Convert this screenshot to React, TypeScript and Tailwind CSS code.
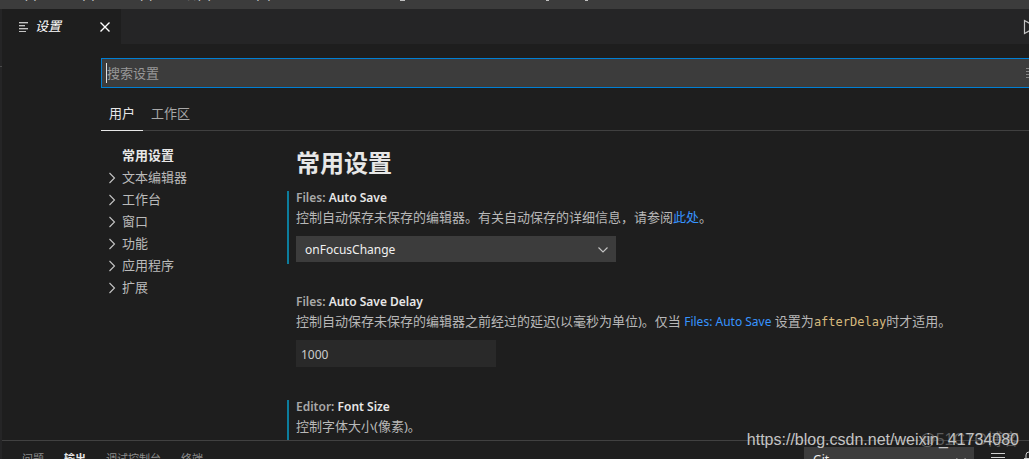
import React from "react";

const sections = ["文本编辑器", "工作台", "窗口", "功能", "应用程序", "扩展"];
const menus = ["文件(F)", "编辑(E)", "选择(S)", "查看(V)", "转到(G)"];

function TitleBar() {
  return (
    <header className="flex h-[9px] shrink-0 items-end overflow-hidden bg-[#3c3c3c] text-[12px] leading-4 text-[#cccccc]">
      <nav className="mb-[6px] flex gap-5">
        {menus.map((m) => (
          <button key={m} type="button" className="whitespace-nowrap">
            {m}
          </button>
        ))}
      </nav>
      <svg viewBox="0 0 190 9" className="ml-auto mr-[439px] h-[9px] w-[190px]" fill="#c0c0c0" shapeRendering="crispEdges">
        <path d="M0 0h5v1H0zM146 0h3v1h-3zM185 0h3v1h-3z" />
      </svg>
    </header>
  );
}

function Chevron() {
  return (
    <svg viewBox="0 0 16 16" className="h-4 w-4 shrink-0" fill="none" stroke="#c5c5c5" strokeWidth="1.1">
      <path d="M5.5 3 L10.5 8 L5.5 13" />
    </svg>
  );
}

function SelectArrow() {
  return (
    <svg
      viewBox="0 0 16 16"
      className="pointer-events-none mt-[6px] -ml-[21px] mr-[5px] h-4 w-4 shrink-0"
      fill="none"
      stroke="#c5c5c5"
      strokeWidth="1.1"
    >
      <path d="M3.5 5.5 L8 10 L12.5 5.5" />
    </svg>
  );
}

function TabBar() {
  return (
    <div className="flex h-[35px] shrink-0 items-stretch justify-between bg-[#252526]">
      <div className="flex w-[119px] items-center bg-[#1e1e1e] pl-4 text-[13px] text-white">
        <svg viewBox="0 0 12 12" className="mr-1 h-3 w-3 shrink-0" fill="#c5c5c5" shapeRendering="crispEdges">
          <path d="M1 1h9v1H1zM1 4h6v1H1zM1 7h9v1H1zM1 10h7v1H1z" />
          <path d="M1 2h9v1H1zM1 5h6v1H1zM1 8h9v1H1z" fillOpacity="0.35" />
        </svg>
        <span className="flex-1 pl-px italic">设置</span>
        <button type="button" aria-label="关闭" className="mr-2 flex h-4 w-4 items-center justify-center">
          <svg viewBox="0 0 16 16" className="h-4 w-4" fill="none" stroke="#ffffff" strokeWidth="1.4">
            <path d="M3.5 3.5 L12.5 12.5 M12.5 3.5 L3.5 12.5" />
          </svg>
        </button>
      </div>
      <button type="button" aria-label="运行" className="flex w-[6px] items-center overflow-hidden">
        <svg viewBox="0 0 16 16" className="h-4 w-4 shrink-0" fill="none" stroke="#c5c5c5" strokeWidth="1.2">
          <path d="M1.5 1.5 L13 8 L1.5 14.5 Z" />
        </svg>
      </button>
    </div>
  );
}

function Setting({
  id,
  group,
  name,
  modified,
  children,
  control,
}: {
  id: string;
  group: string;
  name: string;
  modified?: boolean;
  children: React.ReactNode;
  control?: React.ReactNode;
}) {
  return (
    <div className={modified ? "border-l-2 border-[#0c7d9d] pl-[7px]" : "border-l-2 border-transparent pl-[7px]"}>
      <label htmlFor={id} className="block h-4 text-[12px] leading-[14px] font-semibold text-[#a9a9a9]">
        {group}: <span className="text-[#e7e7e7]">{name}</span>
      </label>
      <p className="h-[22px] text-[13px] leading-[21px] text-[#b8b8b8]">{children}</p>
      {control}
    </div>
  );
}

export default function App() {
  return (
    <div className="relative flex h-screen flex-col overflow-hidden bg-[#1e1e1e] font-['Noto_Sans','Noto_Sans_CJK_SC',sans-serif] text-[13px] text-[#cccccc]">
      <TitleBar />
      <div className="flex min-h-0 flex-1">
        <div className="w-[2px] shrink-0 bg-[#252526] pt-[57px]">
          <div className="h-px bg-[#4a4a4a]" />
        </div>
        <div className="flex min-w-0 flex-1 flex-col">
          <TabBar />
          <main className="flex min-h-0 flex-1 flex-col overflow-hidden pt-[14px] pl-[99px]">
            <div className="flex h-[30px] shrink-0 items-center border border-r-0 border-[#007fd4] bg-[#3c3c3c] pl-1">
              <span className="h-5 w-px bg-[#e0e0e0]" />
              <input
                type="text"
                aria-label="搜索设置"
                placeholder="搜索设置"
                className="h-7 min-w-0 flex-1 bg-transparent text-[13px] placeholder-[#989898] outline-none"
              />
              <svg viewBox="0 0 3 12" className="h-3 w-[3px]" fill="#858585" shapeRendering="crispEdges">
                <path d="M0 1h3v1H0zM0 4h3v1H0zM0 7h3v1H0zM0 10h3v1H0z" />
              </svg>
            </div>
            <div className="flex h-[43px] shrink-0 items-end border-b border-[#404040] leading-[30px]">
              <button type="button" className="-mb-px h-[33px] border-b border-[#e7e7e7] px-2 pb-[2px] text-[#e7e7e7]">
                用户
              </button>
              <button type="button" className="h-8 px-2 pb-[2px] text-[#a8a8a8]">
                工作区
              </button>
            </div>
            <div className="flex min-h-0 flex-1">
              <nav className="w-[186px] shrink-0 pt-[14px] leading-5">
                <button type="button" className="flex h-[22px] pl-[21px] font-bold text-[#e7e7e7]">
                  常用设置
                </button>
                {sections.map((s) => (
                  <button key={s} type="button" className="flex h-[22px] items-center gap-[2px] pl-[3px] text-[#bbbbbb]">
                    <Chevron />
                    <span className="pb-[2px]">{s}</span>
                  </button>
                ))}
              </nav>
              <div className="min-w-0 flex-1 overflow-hidden whitespace-nowrap">
                <h1 className="mt-4 mb-3 pl-[9px] text-[24px] leading-8 font-bold text-[#e7e7e7]">常用设置</h1>
                <Setting
                  id="auto-save"
                  group="Files"
                  name="Auto Save"
                  modified
                  control={
                    <div className="flex w-[320px] pt-[7px] pb-[2px]">
                      <select
                        id="auto-save"
                        className="h-[26px] min-w-0 flex-1 appearance-none bg-[#3c3c3c] pt-px pl-[9px] text-[12px] text-[#f0f0f0] outline-none"
                      >
                        <option>onFocusChange</option>
                      </select>
                      <SelectArrow />
                    </div>
                  }
                >
                  控制自动保存未保存的编辑器。有关自动保存的详细信息，请参阅
                  <a href="#auto-save" className="text-[#3794ff]">
                    此处
                  </a>
                  。
                </Setting>
                <div className="h-[31px]" />
                <Setting
                  id="auto-save-delay"
                  group="Files"
                  name="Auto Save Delay"
                  control={
                    <div className="pt-[7px]">
                      <input
                        id="auto-save-delay"
                        type="text"
                        defaultValue="1000"
                        className="block h-[27px] w-[200px] bg-[#292929] pt-px pl-[5px] text-[12px] text-[#cccccc] outline-none"
                      />
                    </div>
                  }
                >
                  控制自动保存未保存的编辑器之前经过的延迟(以毫秒为单位)。仅当{" "}
                  <a href="#auto-save" className="text-[12px] text-[#3794ff]">
                    Files: Auto Save
                  </a>{" "}
                  设置为<code className="font-['DejaVu_Sans_Mono',monospace] text-[12px] text-[#d7ba7d]">afterDelay</code>
                  时才适用。
                </Setting>
                <div className="h-[33px]" />
                <Setting
                  id="font-size"
                  group="Editor"
                  name="Font Size"
                  modified
                  control={
                    <input id="font-size" type="text" className="mt-[7px] block h-[27px] w-[200px] bg-[#292929]" />
                  }
                >
                  控制字体大小(像素)。
                </Setting>
              </div>
            </div>
          </main>
          <footer className="flex h-[19px] shrink-0 items-start overflow-hidden border-t border-[#414141] text-[11px] text-[#8c8c8c]">
            <div className="flex flex-1 gap-5 pt-[9px] pl-5 leading-[18px]">
              <button type="button">问题</button>
              <button type="button" className="font-bold text-[#e7e7e7]">
                输出
              </button>
              <button type="button">调试控制台</button>
              <button type="button">终端</button>
            </div>
            <div className="mt-[6px] mr-4 flex w-[170px] shrink-0">
              <select
                aria-label="输出通道"
                className="h-[25px] min-w-0 flex-1 appearance-none bg-[#3c3c3c] pl-[9px] text-[12px] text-[#f0f0f0]"
              >
                <option>Git</option>
              </select>
              <SelectArrow />
            </div>
            <svg viewBox="0 0 39 12" className="mt-[10px] h-3 w-[39px] shrink-0" fill="none" stroke="#d0d0d0">
              <path d="M1 2.5h14M1 6.5h14M1 10.5h14" shapeRendering="crispEdges" />
              <path d="M36 9V4a3 3 0 0 1 6 0M34 7.5h8" />
            </svg>
          </footer>
        </div>
      </div>
      <div className="pointer-events-none absolute right-[10px] bottom-[8px] font-['Liberation_Sans','Noto_Sans_CJK_SC',sans-serif] leading-5">
        <span className="absolute right-0 text-[16px] whitespace-nowrap text-[#5c5c5c]">@51CTO博客</span>
        <span className="relative text-[16px] text-[#c4c4c4]">https://blog.csdn.net/weixin_41734080</span>
      </div>
    </div>
  );
}
